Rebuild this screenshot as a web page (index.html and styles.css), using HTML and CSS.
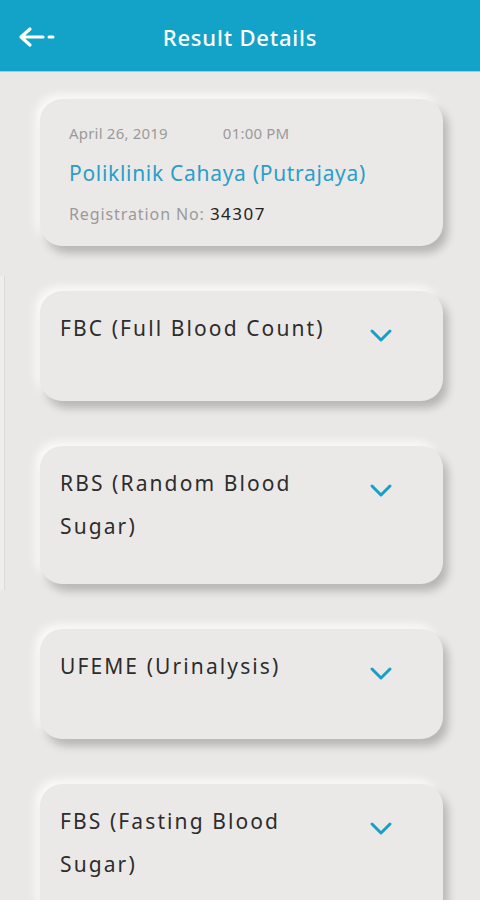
FILE: index.html
```html
<!DOCTYPE html>
<html>
<head>
<meta charset="utf-8">
<link rel="stylesheet" href="styles.css">
</head>
<body>
<header class="appbar">
  <span class="back">
    <svg width="40" height="24" viewBox="0 0 40 24">
      <path d="M13 4 L4 12 L13 20 M4 12 H26" fill="none" stroke="#fff" stroke-width="3.2" stroke-linecap="round" stroke-linejoin="round"/>
      <path d="M32 12 H36" fill="none" stroke="#fff" stroke-width="3" stroke-linecap="round"/>
    </svg>
  </span>
  <h1 class="title">Result Details</h1>
</header>
<div class="edge"></div>
<main class="list">
  <section class="card info">
    <div class="dt"><span>April 26, 2019</span><span>01:00 PM</span></div>
    <div class="clinic">Poliklinik Cahaya (Putrajaya)</div>
    <div class="reg">Registration No: <b>34307</b></div>
  </section>
  <section class="card test">
    <div class="name">FBC (Full Blood Count)</div>
    <svg class="chev" width="24" height="16" viewBox="0 0 24 16"><path d="M3 3 L12 12 L21 3" fill="none" stroke="#199fc7" stroke-width="3" stroke-linecap="round" stroke-linejoin="round"/></svg>
  </section>
  <section class="card test">
    <div class="name">RBS (Random Blood Sugar)</div>
    <svg class="chev" width="24" height="16" viewBox="0 0 24 16"><path d="M3 3 L12 12 L21 3" fill="none" stroke="#199fc7" stroke-width="3" stroke-linecap="round" stroke-linejoin="round"/></svg>
  </section>
  <section class="card test">
    <div class="name">UFEME (Urinalysis)</div>
    <svg class="chev" width="24" height="16" viewBox="0 0 24 16"><path d="M3 3 L12 12 L21 3" fill="none" stroke="#199fc7" stroke-width="3" stroke-linecap="round" stroke-linejoin="round"/></svg>
  </section>
  <section class="card test">
    <div class="name">FBS (Fasting Blood Sugar)</div>
    <svg class="chev" width="24" height="16" viewBox="0 0 24 16"><path d="M3 3 L12 12 L21 3" fill="none" stroke="#199fc7" stroke-width="3" stroke-linecap="round" stroke-linejoin="round"/></svg>
  </section>
</main>
</body>
</html>
```
FILE: styles.css
```css
* { box-sizing: border-box; }
html, body { margin: 0; padding: 0; }
body {
  width: 480px;
  height: 900px;
  overflow: hidden;
  background: #eae8e7;
  font-family: "Noto Sans", "Open Sans", sans-serif;
  position: relative;
}
.appbar {
  height: 72px;
  background: #13a3c9;
  border-bottom: 1px solid #8fd0e3;
  display: flex;
  align-items: center;
  justify-content: center;
  position: relative;
}
.back {
  position: absolute;
  left: 17px;
  top: 25px;
  display: flex;
}
.title {
  margin: 0;
  color: #fff;
  font-size: 22px;
  font-weight: 500;
  letter-spacing: 0.8px;
  padding-top: 2px;
}
.edge {
  position: absolute;
  left: 0;
  top: 276px;
  width: 5px;
  height: 314px;
  border-right: 1px solid #dcdad9;
  background: #efeeed;
}
.list {
  display: flex;
  flex-direction: column;
  gap: 45px;
  padding: 27px 37px 0 40px;
}
.card {
  background: #ebe9e8;
  border-radius: 22px;
  box-shadow: 5px 7px 8px rgba(0,0,0,0.22), -4px -4px 10px rgba(255,255,255,0.85);
}
.info {
  padding: 15px 28px 12px 29px;
}
.dt {
  display: flex;
  gap: 55px;
  color: #9a9a9a;
  font-size: 15px;
  line-height: 38px;
  letter-spacing: 0.2px;
}
.clinic {
  color: #2b9dc9;
  font-size: 21px;
  line-height: 42px;
  letter-spacing: 0.7px;
}
.reg {
  color: #9a9a9a;
  font-size: 16px;
  line-height: 40px;
  letter-spacing: 0.9px;
}
.reg b {
  color: #222;
  font-weight: 400;
  font-size: 17px;
  letter-spacing: 1.5px;
}
.test {
  display: flex;
  justify-content: space-between;
  align-items: flex-start;
  padding: 16px 50px 36px 20px;
  min-height: 110px;
}
.name {
  width: 285px;
  color: #2d2d2d;
  font-size: 21px;
  line-height: 43px;
  letter-spacing: 2.1px;
}
.chev {
  margin-top: 21px;
  flex: none;
}
```
